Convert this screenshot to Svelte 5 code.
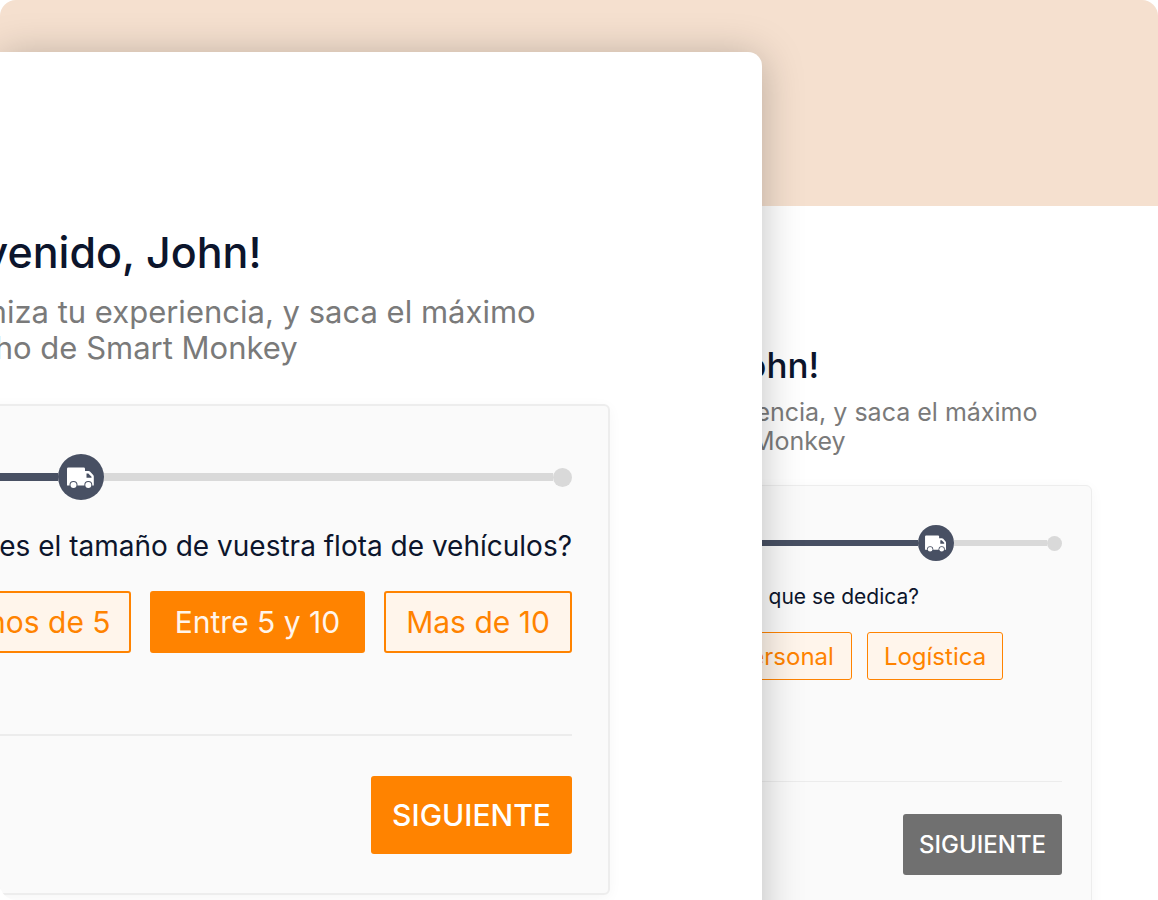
<script>
  const screens = [
    {
      id: 'activity',
      question: '¿Cuál es la actividad a que se dedica?',
      options: ['Comida', 'Personal', 'Logística'],
      selected: -1
    },
    {
      id: 'fleet',
      question: '¿Cuál es el tamaño de vuestra flota de vehículos?',
      options: ['Menos de 5', 'Entre 5 y 10', 'Mas de 10'],
      selected: 1
    }
  ];
  let chosen = $state(screens.map((s) => s.selected));
</script>

{#snippet wizard(screen, index)}
  <div class="wizard">
    <h1>Bienvenido, John!</h1>
    <p class="intro">Customiza tu experiencia, y saca el máximo<br />provecho de Smart Monkey</p>
    <section class="card">
      <div class="stepper">
        <span class="done"></span>
        <span class="step">
          <svg viewBox="0 0 46 46" aria-hidden="true">
            <circle cx="23" cy="23" r="23" fill="#485063" />
            <path d="M9 14.800q0-1.300 1.300-1.300H25.700q1.300 0 1.300 1.300V17h3.500q1 0 1.700.700l3 3.300q.600.700.600 1.600V31.500H9z" fill="#fff" />
            <path d="M28.500 19.500h1.800l3.200 3.300v1h-5z" fill="#485063" />
            <circle cx="15.500" cy="31" r="4" fill="#485063" />
            <circle cx="15.500" cy="31" r="3" fill="#fff" />
            <circle cx="30.300" cy="31" r="4" fill="#485063" />
            <circle cx="30.300" cy="31" r="3" fill="#fff" />
          </svg>
        </span>
        <span class="todo"></span>
        <span class="end"></span>
      </div>
      <h2 id="{screen.id}-question">{screen.question}</h2>
      <div class="options" role="group" aria-labelledby="{screen.id}-question">
        {#each screen.options as option, i}
          <button
            type="button"
            class="option"
            class:selected={chosen[index] === i}
            aria-pressed={chosen[index] === i}
            onclick={() => (chosen[index] = i)}>{option}</button>
        {/each}
      </div>
      <footer>
        <button type="button" class="next">SIGUIENTE</button>
      </footer>
    </section>
  </div>
{/snippet}

<main>
  <div class="banner"></div>
  <div class="screen back">{@render wizard(screens[0], 0)}</div>
  <div class="screen front">{@render wizard(screens[1], 1)}</div>
</main>

<style>
  :global(body) {
    margin: 0;
    background: #fff;
  }
  main {
    position: relative;
    height: 100vh;
    overflow: hidden;
    border-radius: 16px;
    background: #fff;
    font-family: Inter, 'Noto Sans', sans-serif;
  }
  .banner {
    height: 206px;
    background: #f5e0cf;
  }
  .screen {
    display: flex;
    justify-content: flex-end;
    box-sizing: border-box;
    background: #fff;
  }
  .back {
    --width: 572px;
    --pad: 29px;
    --title: 35px;
    --title-line: 40px;
    --text: 25px;
    --button-text: 24px;
    --text-line: 29px;
    --small: 21px;
    --intro-gap: 13px;
    --card-gap: 29px;
    --card-top: 39px;
    --step: 36px;
    --bar: 6px;
    --dot: 15px;
    --question-gap: 20px;
    --question-line: 32px;
    --question-inset: 143px;
    --options-gap: 19px;
    --columns: 135px 135px 136px;
    --options-inset: 59px;
    --gap: 15px;
    --option-height: 48px;
    --option-border: 1px;
    --rule-gap: 101px;
    --rule: 1px;
    --footer-gap: 32px;
    --next-width: 159px;
    --next-height: 61px;
    --next-color: #707070;
    --remaining: 108px;
    padding: 139px 66px 0 0;
  }
  .front {
    --width: 716px;
    --pad: 36px;
    --title: 43px;
    --title-line: 48px;
    --text: 31px;
    --button-text: 30px;
    --text-line: 36px;
    --small: 28px;
    --intro-gap: 18px;
    --card-gap: 38px;
    --card-top: 48px;
    --step: 46px;
    --bar: 8px;
    --dot: 19px;
    --question-gap: 26px;
    --question-line: 40px;
    --question-inset: 0px;
    --options-gap: 25px;
    --columns: 208px 215px 188px;
    --options-inset: 0px;
    --gap: 19px;
    --option-height: 62px;
    --option-border: 2px;
    --rule-gap: 81px;
    --rule: 2px;
    --footer-gap: 40px;
    --next-width: 201px;
    --next-height: 78px;
    --next-color: #ff8300;
    --remaining: 468px;
    position: absolute;
    inset: 52px 396px -60px 0;
    padding: 176px 152px 0 0;
    border-radius: 0 14px 0 0;
    box-shadow: 0 4px 42px rgba(0, 0, 0, 0.25);
  }
  .wizard {
    flex: none;
    width: var(--width);
  }
  h1 {
    margin: 0;
    color: #0c152c;
    font-size: var(--title);
    font-weight: 500;
    line-height: var(--title-line);
    white-space: nowrap;
  }
  .intro {
    margin: var(--intro-gap) 0 var(--card-gap);
    color: #7a7a7a;
    font-size: var(--text);
    line-height: var(--text-line);
    white-space: nowrap;
  }
  .card {
    box-sizing: border-box;
    padding: var(--card-top) var(--pad) 39px;
    border: var(--rule) solid #ededed;
    border-radius: 6px;
    background: #fafafa;
    box-shadow: 0 3px 14px rgba(0, 0, 0, 0.04);
  }
  .stepper {
    display: flex;
    align-items: center;
  }
  .step {
    width: var(--step);
    height: var(--step);
  }
  .step svg {
    display: block;
    width: 100%;
    height: 100%;
  }
  .done,
  .todo {
    height: var(--bar);
    background: #d9d9d9;
  }
  .done {
    flex: 1;
    background: #485063;
  }
  .todo {
    width: calc(var(--remaining) - var(--dot));
  }
  .step,
  .todo,
  .end {
    flex: none;
  }
  .end {
    width: var(--dot);
    height: var(--dot);
    border-radius: 50%;
    background: #d9d9d9;
  }
  h2 {
    display: flex;
    justify-content: flex-end;
    margin: var(--question-gap) 0 var(--options-gap);
    padding-right: var(--question-inset);
    color: #0c152c;
    font-size: var(--small);
    font-weight: 400;
    line-height: var(--question-line);
    white-space: nowrap;
  }
  .options {
    display: grid;
    grid-template-columns: var(--columns);
    justify-content: end;
    gap: var(--gap);
    padding-right: var(--options-inset);
  }
  button {
    box-sizing: border-box;
    padding: 0;
    border: 0;
    border-radius: 3px;
    font-family: inherit;
    font-size: var(--button-text);
    white-space: nowrap;
    cursor: pointer;
  }
  .option {
    height: var(--option-height);
    border: var(--option-border) solid #ff8300;
    background: #fff5eb;
    color: #ff8300;
  }
  .selected {
    background: #ff8300;
    color: #fff5eb;
  }
  footer {
    display: flex;
    justify-content: flex-end;
    margin-top: var(--rule-gap);
    padding-top: var(--footer-gap);
    border-top: var(--rule) solid #ececec;
  }
  .next {
    width: var(--next-width);
    height: var(--next-height);
    background: var(--next-color);
    color: #fff;
    font-weight: 500;
  }
</style>
